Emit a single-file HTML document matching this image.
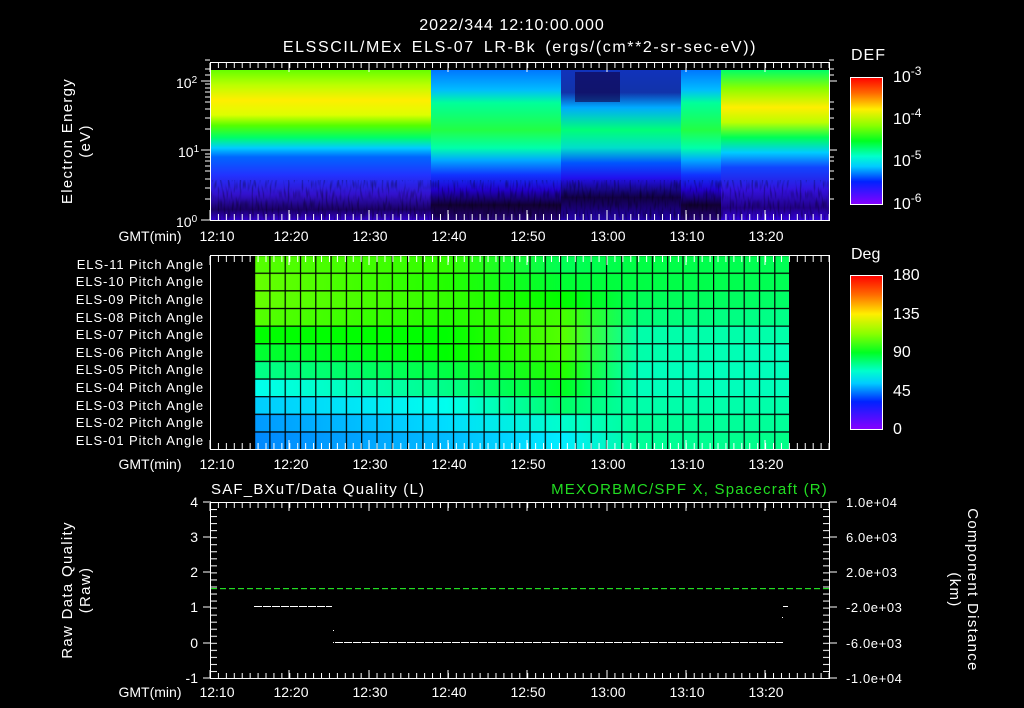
<!DOCTYPE html>
<html><head><meta charset="utf-8"><style>
html,body{margin:0;padding:0;background:#000;width:1024px;height:708px;overflow:hidden}
svg{display:block}
text{font-family:"Liberation Sans",sans-serif;fill:#fff}
</style></head><body>
<svg width="1024" height="708" viewBox="0 0 1024 708" xmlns="http://www.w3.org/2000/svg">
<defs>
<linearGradient id="cb" x1="0" y1="0" x2="0" y2="1">
<stop offset="0" stop-color="#ff0000"/><stop offset="0.12" stop-color="#ff6600"/><stop offset="0.25" stop-color="#ffee00"/><stop offset="0.38" stop-color="#88ff00"/><stop offset="0.5" stop-color="#00ff22"/><stop offset="0.62" stop-color="#00ffcc"/><stop offset="0.7" stop-color="#00ccff"/><stop offset="0.82" stop-color="#0022ff"/><stop offset="1" stop-color="#8800ff"/>
</linearGradient>
<linearGradient id="sL" x1="0" y1="0" x2="0" y2="1">
<stop offset="0" stop-color="#66ff00"/><stop offset="0.1" stop-color="#bbff00"/><stop offset="0.2" stop-color="#ffee00"/><stop offset="0.3" stop-color="#ddff00"/><stop offset="0.37" stop-color="#55ff00"/><stop offset="0.45" stop-color="#00ff66"/><stop offset="0.52" stop-color="#00ccff"/><stop offset="0.58" stop-color="#0066ff"/><stop offset="0.7" stop-color="#2233ff"/><stop offset="0.83" stop-color="#3311cc"/><stop offset="0.93" stop-color="#1a0066"/><stop offset="1" stop-color="#3300cc"/>
</linearGradient>
<linearGradient id="sM" x1="0" y1="0" x2="0" y2="1">
<stop offset="0" stop-color="#0077ff"/><stop offset="0.13" stop-color="#00bbff"/><stop offset="0.22" stop-color="#00ff99"/><stop offset="0.4" stop-color="#22ff44"/><stop offset="0.52" stop-color="#00ffaa"/><stop offset="0.6" stop-color="#00aaff"/><stop offset="0.7" stop-color="#1133ff"/><stop offset="0.8" stop-color="#2200cc"/><stop offset="0.9" stop-color="#110033"/><stop offset="1" stop-color="#220077"/>
</linearGradient>
<linearGradient id="sN" x1="0" y1="0" x2="0" y2="1">
<stop offset="0" stop-color="#1133bb"/><stop offset="0.15" stop-color="#1133aa"/><stop offset="0.25" stop-color="#00aaff"/><stop offset="0.4" stop-color="#00ff77"/><stop offset="0.52" stop-color="#00ddcc"/><stop offset="0.62" stop-color="#0055ff"/><stop offset="0.72" stop-color="#2211ee"/><stop offset="0.85" stop-color="#110044"/><stop offset="1" stop-color="#2200aa"/>
</linearGradient>
<linearGradient id="sR" x1="0" y1="0" x2="0" y2="1">
<stop offset="0" stop-color="#00ff66"/><stop offset="0.12" stop-color="#88ff00"/><stop offset="0.25" stop-color="#ffee00"/><stop offset="0.35" stop-color="#bbff00"/><stop offset="0.45" stop-color="#00ff55"/><stop offset="0.55" stop-color="#00ccff"/><stop offset="0.65" stop-color="#1144ff"/><stop offset="0.8" stop-color="#3311dd"/><stop offset="0.92" stop-color="#220088"/><stop offset="1" stop-color="#3300dd"/>
</linearGradient>
<filter id="nz" x="0" y="0" width="1" height="1"><feTurbulence type="fractalNoise" baseFrequency="0.5 0.1" numOctaves="1" seed="3"/><feColorMatrix values="0 0 0 0 0  0 0 0 0 0  0 0 0 0 0  0 0 0 -2.5 1.3"/></filter>
<pattern id="mt" x="210" y="0" width="7.93" height="10" patternUnits="userSpaceOnUse"><rect x="0" y="0" width="1" height="10" fill="#fff"/></pattern>
<pattern id="vg" x="254" y="0" width="15.3" height="10" patternUnits="userSpaceOnUse"><rect x="0" y="0" width="1.2" height="10" fill="#000"/></pattern>
<pattern id="hg" x="0" y="255" width="10" height="17.64" patternUnits="userSpaceOnUse"><rect x="0" y="0" width="10" height="1.2" fill="#000"/></pattern>
<pattern id="yt3" x="0" y="502" width="10" height="7.04" patternUnits="userSpaceOnUse"><rect x="0" y="0" width="10" height="1" fill="#fff"/></pattern>
<pattern id="gd" x="211" y="0" width="9" height="2" patternUnits="userSpaceOnUse"><rect x="0" y="0" width="6" height="1.2" fill="#22dd22"/></pattern>
<pattern id="wd" x="254" y="0" width="9" height="2" patternUnits="userSpaceOnUse"><rect x="0" y="0" width="8" height="1" fill="#fff"/></pattern>
<linearGradient id="r11" x1="254" x2="789" gradientUnits="userSpaceOnUse"><stop offset="0" stop-color="#55ff00"/><stop offset=".36" stop-color="#33ff00"/><stop offset=".58" stop-color="#00ff55"/><stop offset=".72" stop-color="#00ff44"/><stop offset="1" stop-color="#00ff55"/></linearGradient>
<linearGradient id="r10" x1="254" x2="789" gradientUnits="userSpaceOnUse"><stop offset="0" stop-color="#66ff00"/><stop offset=".36" stop-color="#22ff00"/><stop offset=".58" stop-color="#00ff33"/><stop offset=".72" stop-color="#00ff44"/><stop offset="1" stop-color="#00ff55"/></linearGradient>
<linearGradient id="r9" x1="254" x2="789" gradientUnits="userSpaceOnUse"><stop offset="0" stop-color="#66ff00"/><stop offset=".36" stop-color="#33ff00"/><stop offset=".58" stop-color="#00ff00"/><stop offset=".72" stop-color="#00ff55"/><stop offset="1" stop-color="#00ff66"/></linearGradient>
<linearGradient id="r8" x1="254" x2="789" gradientUnits="userSpaceOnUse"><stop offset="0" stop-color="#55ff00"/><stop offset=".36" stop-color="#22ff00"/><stop offset=".58" stop-color="#44ff00"/><stop offset=".72" stop-color="#00ff77"/><stop offset="1" stop-color="#00ff88"/></linearGradient>
<linearGradient id="r7" x1="254" x2="789" gradientUnits="userSpaceOnUse"><stop offset="0" stop-color="#00ff00"/><stop offset=".36" stop-color="#00ff00"/><stop offset=".58" stop-color="#55ff00"/><stop offset=".72" stop-color="#00ffaa"/><stop offset="1" stop-color="#00ffaa"/></linearGradient>
<linearGradient id="r6" x1="254" x2="789" gradientUnits="userSpaceOnUse"><stop offset="0" stop-color="#00ff33"/><stop offset=".36" stop-color="#00ff00"/><stop offset=".58" stop-color="#44ff00"/><stop offset=".72" stop-color="#00ffaa"/><stop offset="1" stop-color="#00ffbb"/></linearGradient>
<linearGradient id="r5" x1="254" x2="789" gradientUnits="userSpaceOnUse"><stop offset="0" stop-color="#00ff88"/><stop offset=".36" stop-color="#00ff44"/><stop offset=".58" stop-color="#22ff00"/><stop offset=".72" stop-color="#00ffbb"/><stop offset="1" stop-color="#00ffbb"/></linearGradient>
<linearGradient id="r4" x1="254" x2="789" gradientUnits="userSpaceOnUse"><stop offset="0" stop-color="#00ffee"/><stop offset=".36" stop-color="#00ff88"/><stop offset=".58" stop-color="#00ff22"/><stop offset=".72" stop-color="#00ffbb"/><stop offset="1" stop-color="#00ffbb"/></linearGradient>
<linearGradient id="r3" x1="254" x2="789" gradientUnits="userSpaceOnUse"><stop offset="0" stop-color="#00ccff"/><stop offset=".36" stop-color="#00ffee"/><stop offset=".58" stop-color="#00ff66"/><stop offset=".72" stop-color="#00ffaa"/><stop offset="1" stop-color="#00ffaa"/></linearGradient>
<linearGradient id="r2" x1="254" x2="789" gradientUnits="userSpaceOnUse"><stop offset="0" stop-color="#0099ff"/><stop offset=".36" stop-color="#00ddff"/><stop offset=".58" stop-color="#00ffcc"/><stop offset=".72" stop-color="#00ff99"/><stop offset="1" stop-color="#00ff99"/></linearGradient>
<linearGradient id="r1" x1="254" x2="789" gradientUnits="userSpaceOnUse"><stop offset="0" stop-color="#0088ff"/><stop offset=".36" stop-color="#00bbff"/><stop offset=".58" stop-color="#00eeff"/><stop offset=".72" stop-color="#00ff99"/><stop offset="1" stop-color="#00ff88"/></linearGradient>
</defs>

<!-- Titles -->
<text x="512" y="30" font-size="16" text-anchor="middle" letter-spacing="1">2022/344 12:10:00.000</text>
<text x="520" y="52" font-size="16" text-anchor="middle" letter-spacing="1.6" word-spacing="3">ELSSCIL/MEx ELS-07 LR-Bk  (ergs/(cm**2-sr-sec-eV))</text>

<!-- Panel 1 spectrogram -->
<rect x="211" y="70" width="220" height="150" fill="url(#sL)"/>
<rect x="431" y="70" width="130" height="150" fill="url(#sM)"/>
<rect x="561" y="70" width="120" height="150" fill="url(#sN)"/>
<rect x="681" y="70" width="40" height="150" fill="url(#sM)"/>
<rect x="721" y="70" width="108" height="150" fill="url(#sR)"/>
<rect x="211" y="180" width="618" height="40" filter="url(#nz)" opacity="0.45"/>
<rect x="575" y="72" width="45" height="30" fill="#110044" opacity="0.6"/>
<!-- Panel 1 frame -->
<path d="M210.5 62 V220.5 H829.5 V62 M210 62.5 H830" stroke="#fff" fill="none"/>
<rect x="211" y="63" width="618" height="5" fill="url(#mt)"/>
<rect x="211" y="214" width="618" height="6" fill="url(#mt)"/>
<g stroke="#fff">
<path d="M210 63v9M289 63v9M369 63v9M448 63v9M527 63v9M607 63v9M686 63v9M765 63v9M210 210v10M289 210v10M369 210v10M448 210v10M527 210v10M607 210v10M686 210v10M765 210v10"/>
<path d="M201 220h10M201 81h10M201 150h10M205 199h5M205 188h5M205 179h5M205 171h5M205 166h5M205 161h5M205 157h5M205 154h5M205 129h5M205 118h5M205 109h5M205 102h5M205 97h5M205 92h5M205 88h5M205 84h5M205 60h5M205 69h5M205 75h5"/>
<path d="M829 81h8M829 150h8M829 60h5M829 69h5M829 75h5M829 102h5M829 109h5M829 118h5M829 129h5M829 157h5M829 161h5M829 171h5M829 179h5M829 199h5"/>
</g>
<text x="176" y="88" font-size="14">10<tspan dy="-5" font-size="10">2</tspan></text>
<text x="178" y="157" font-size="14">10<tspan dy="-5" font-size="10">1</tspan></text>
<text x="176" y="227" font-size="14">10<tspan dy="-5" font-size="10">0</tspan></text>
<text transform="translate(72,141) rotate(-90)" font-size="15" text-anchor="middle" letter-spacing="1.3">Electron Energy</text>
<text transform="translate(90,141) rotate(-90)" font-size="15" text-anchor="middle" letter-spacing="1.3">(eV)</text>

<g font-size="14" text-anchor="middle">
<text x="150" y="241">GMT(min)</text><text x="217" y="241">12:10</text><text x="291" y="241">12:20</text><text x="370" y="241">12:30</text><text x="449" y="241">12:40</text><text x="528" y="241">12:50</text><text x="608" y="241">13:00</text><text x="687" y="241">13:10</text><text x="766" y="241">13:20</text>
</g>

<!-- DEF colorbar -->
<text x="851" y="60" font-size="16" letter-spacing="1">DEF</text>
<rect x="850.5" y="77.5" width="32" height="127" fill="url(#cb)" stroke="#fff"/>
<g font-size="16"><text x="893" y="82">10<tspan dy="-7" font-size="12">-3</tspan></text><text x="893" y="124">10<tspan dy="-7" font-size="12">-4</tspan></text><text x="893" y="166">10<tspan dy="-7" font-size="12">-5</tspan></text><text x="893" y="209">10<tspan dy="-7" font-size="12">-6</tspan></text></g>

<!-- Panel 2 -->
<rect x="254" y="255" width="535" height="17.6" fill="url(#r11)"/>
<rect x="254" y="272.6" width="535" height="17.6" fill="url(#r10)"/>
<rect x="254" y="290.3" width="535" height="17.6" fill="url(#r9)"/>
<rect x="254" y="307.9" width="535" height="17.6" fill="url(#r8)"/>
<rect x="254" y="325.6" width="535" height="17.6" fill="url(#r7)"/>
<rect x="254" y="343.2" width="535" height="17.6" fill="url(#r6)"/>
<rect x="254" y="360.8" width="535" height="17.6" fill="url(#r5)"/>
<rect x="254" y="378.5" width="535" height="17.6" fill="url(#r4)"/>
<rect x="254" y="396.1" width="535" height="17.6" fill="url(#r3)"/>
<rect x="254" y="413.8" width="535" height="17.6" fill="url(#r2)"/>
<rect x="254" y="431.4" width="535" height="18" fill="url(#r1)"/>
<rect x="254" y="255" width="535" height="194" fill="url(#vg)"/>
<rect x="254" y="255" width="535" height="194" fill="url(#hg)"/>
<path d="M210.5 255 V449.5 H829.5 V255 M210 255.5 H830" stroke="#fff" fill="none"/>
<rect x="211" y="256" width="618" height="6" fill="url(#mt)"/>
<rect x="211" y="443" width="618" height="6" fill="url(#mt)"/>
<path stroke="#fff" d="M210 256v9M289 256v9M369 256v9M448 256v9M527 256v9M607 256v9M686 256v9M765 256v9M210 440v9M289 440v9M369 440v9M448 440v9M527 440v9M607 440v9M686 440v9M765 440v9"/>
<g font-size="13" text-anchor="end" letter-spacing="0.9">
<text x="204" y="269">ELS-11 Pitch Angle</text><text x="204" y="286">ELS-10 Pitch Angle</text><text x="204" y="304">ELS-09 Pitch Angle</text><text x="204" y="322">ELS-08 Pitch Angle</text><text x="204" y="339">ELS-07 Pitch Angle</text><text x="204" y="357">ELS-06 Pitch Angle</text><text x="204" y="374">ELS-05 Pitch Angle</text><text x="204" y="392">ELS-04 Pitch Angle</text><text x="204" y="410">ELS-03 Pitch Angle</text><text x="204" y="427">ELS-02 Pitch Angle</text><text x="204" y="445">ELS-01 Pitch Angle</text>
</g>
<g font-size="14" text-anchor="middle">
<text x="150" y="469">GMT(min)</text><text x="217" y="469">12:10</text><text x="291" y="469">12:20</text><text x="370" y="469">12:30</text><text x="449" y="469">12:40</text><text x="528" y="469">12:50</text><text x="608" y="469">13:00</text><text x="687" y="469">13:10</text><text x="766" y="469">13:20</text>
</g>
<text x="851" y="259" font-size="16">Deg</text>
<rect x="850.5" y="275.5" width="32" height="154" fill="url(#cb)" stroke="#fff"/>
<g font-size="16"><text x="893" y="280">180</text><text x="893" y="319">135</text><text x="893" y="357">90</text><text x="893" y="396">45</text><text x="893" y="434">0</text></g>

<!-- Panel 3 -->
<text x="211" y="494" font-size="15" letter-spacing="1.2">SAF_BXuT/Data Quality (L)</text>
<text x="828" y="494" font-size="15" text-anchor="end" letter-spacing="1.2" style="fill:#22dd22">MEXORBMC/SPF X, Spacecraft (R)</text>
<path d="M210.5 502 V678.5 H829.5 V502 M210 502.5 H830" stroke="#fff" fill="none"/>
<rect x="211" y="503" width="618" height="5" fill="url(#mt)"/>
<rect x="211" y="673" width="618" height="5" fill="url(#mt)"/>
<path stroke="#fff" d="M210 503v8M289 503v8M369 503v8M448 503v8M527 503v8M607 503v8M686 503v8M765 503v8M210 670v8M289 670v8M369 670v8M448 670v8M527 670v8M607 670v8M686 670v8M765 670v8"/>
<rect x="211" y="502" width="6" height="176" fill="url(#yt3)"/>
<rect x="823" y="502" width="6" height="176" fill="url(#yt3)"/>
<path stroke="#fff" d="M203 502h8M203 537h8M203 572h8M203 607h8M203 643h8M203 678h8M829 502h8M829 537h8M829 572h8M829 607h8M829 643h8M829 678h8"/>
<g font-size="14" text-anchor="end"><text x="198" y="507">4</text><text x="198" y="542">3</text><text x="198" y="577">2</text><text x="198" y="612">1</text><text x="198" y="648">0</text><text x="198" y="683">-1</text></g>
<rect x="211" y="588" width="618" height="2" fill="url(#gd)"/>
<rect x="254" y="606" width="78" height="1" fill="url(#wd)"/>
<rect x="333" y="642" width="450" height="1" fill="url(#wd)"/>
<rect x="333" y="630" width="1" height="1" fill="#fff"/>
<rect x="783" y="606" width="5" height="1" fill="#fff"/>
<rect x="782" y="617" width="1" height="1" fill="#fff"/>
<g font-size="13" letter-spacing="0.6"><text x="846" y="507">1.0e+04</text><text x="846" y="542">6.0e+03</text><text x="846" y="577">2.0e+03</text><text x="846" y="612">-2.0e+03</text><text x="846" y="648">-6.0e+03</text><text x="846" y="683">-1.0e+04</text></g>
<text transform="translate(72,590) rotate(-90)" font-size="15" text-anchor="middle" letter-spacing="1.3">Raw Data Quality</text>
<text transform="translate(90,590) rotate(-90)" font-size="15" text-anchor="middle" letter-spacing="1.3">(Raw)</text>
<text transform="translate(968,590) rotate(90)" font-size="15" text-anchor="middle" letter-spacing="1.3">Component Distance</text>
<text transform="translate(950,590) rotate(90)" font-size="15" text-anchor="middle" letter-spacing="1.3">(km)</text>
<g font-size="14" text-anchor="middle">
<text x="150" y="697">GMT(min)</text><text x="217" y="697">12:10</text><text x="291" y="697">12:20</text><text x="370" y="697">12:30</text><text x="449" y="697">12:40</text><text x="528" y="697">12:50</text><text x="608" y="697">13:00</text><text x="687" y="697">13:10</text><text x="766" y="697">13:20</text>
</g>
</svg>
</body></html>
